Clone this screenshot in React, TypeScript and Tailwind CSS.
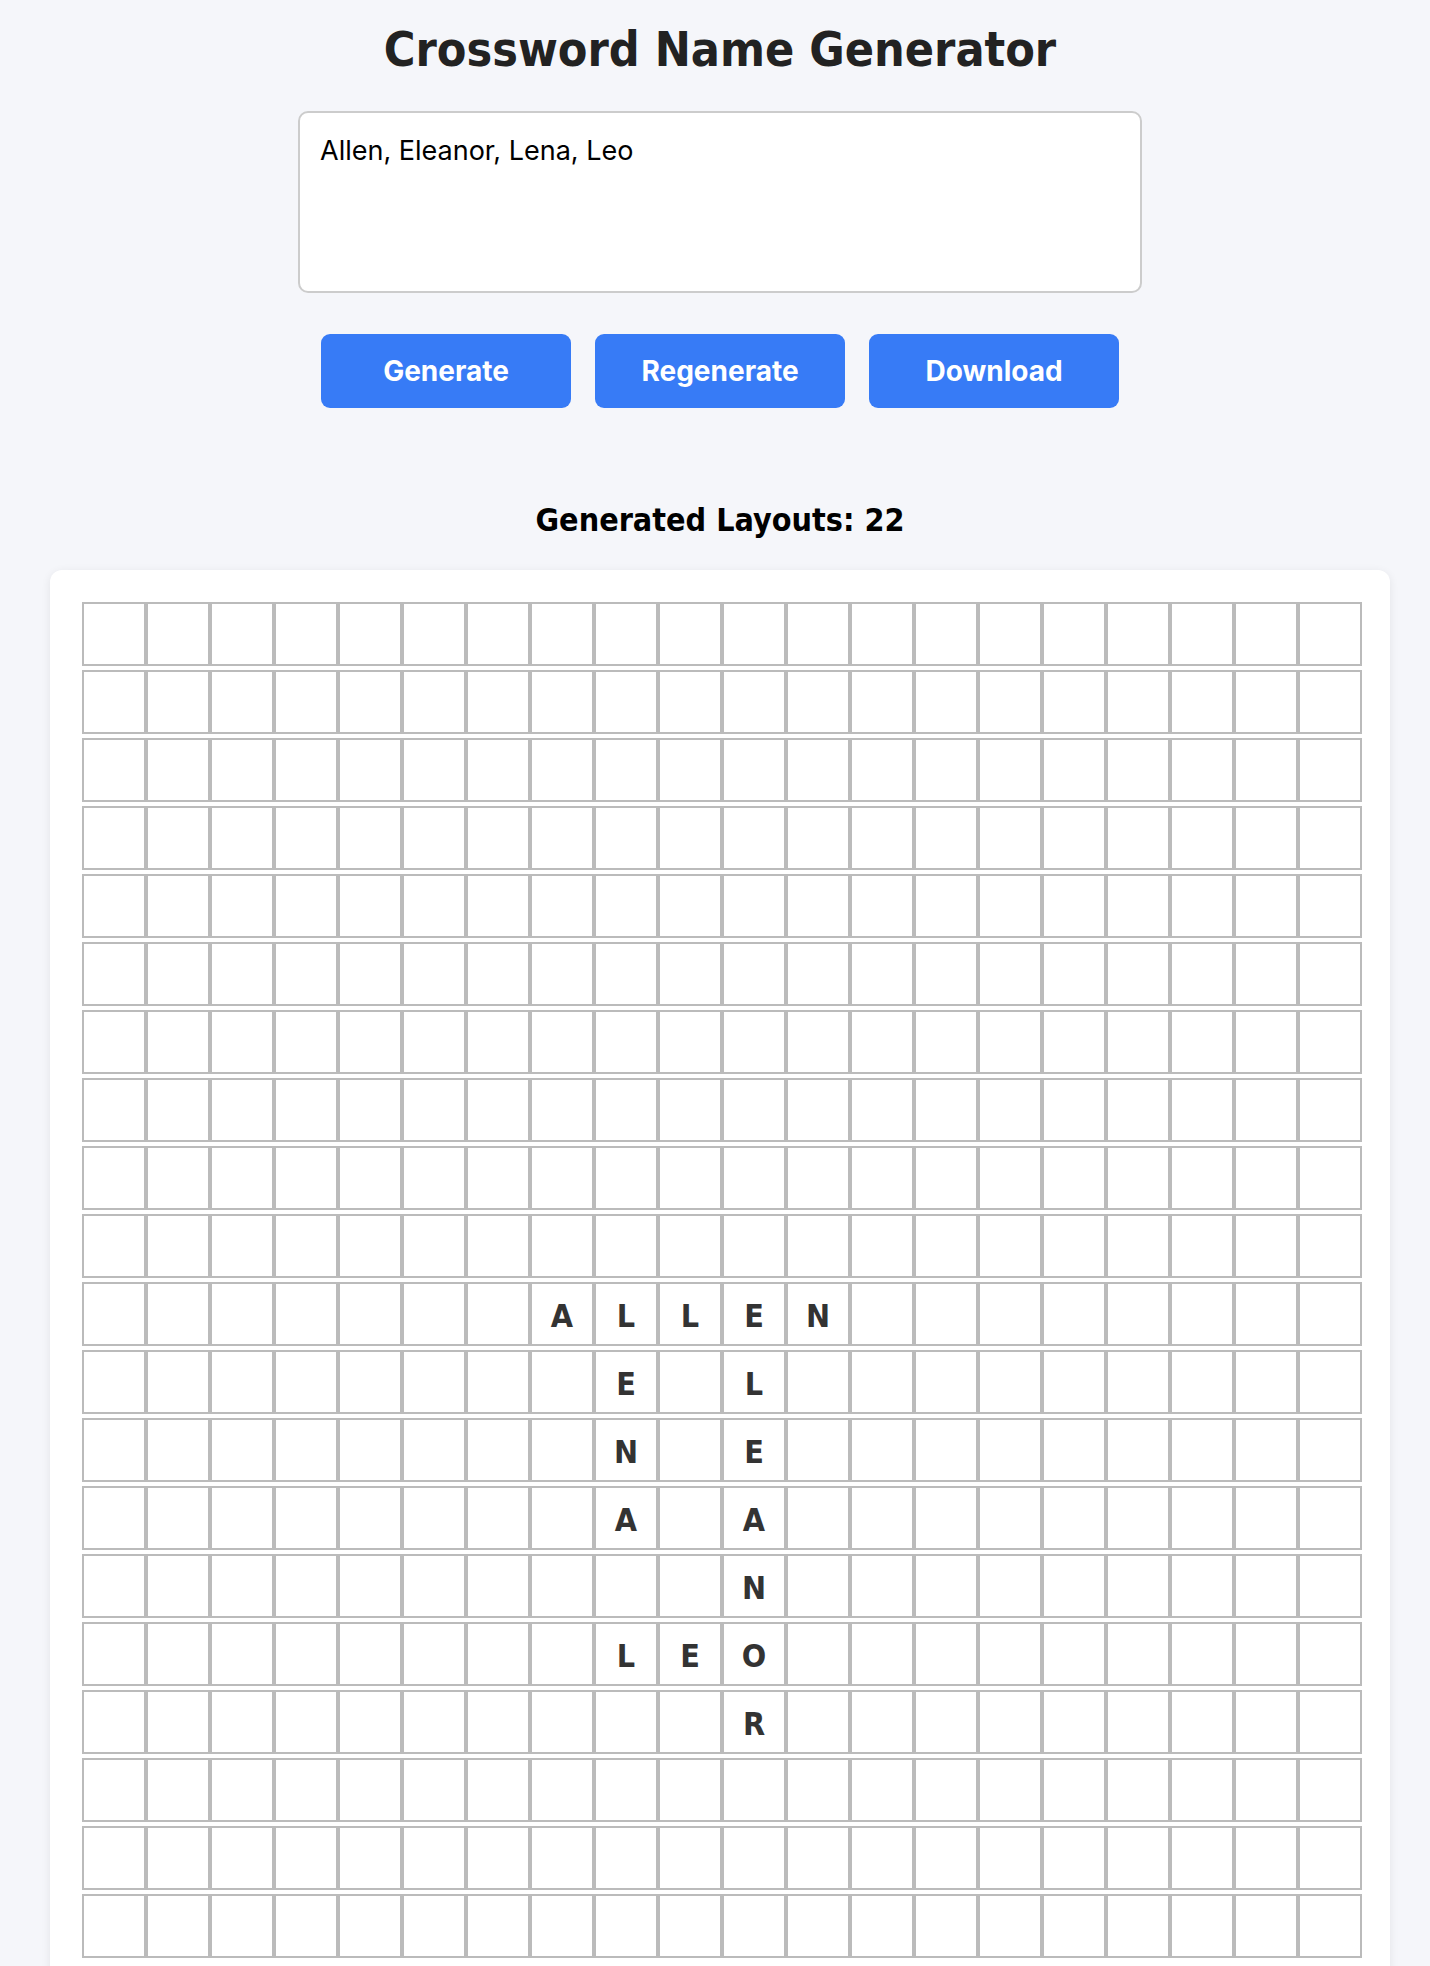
const ROWS = 20;
const COLS = 20;

// letters placed on the grid: [row, col, letter]
const placed: [number, number, string][] = [
  [10, 7, "A"], [10, 8, "L"], [10, 9, "L"], [10, 10, "E"], [10, 11, "N"],
  [11, 8, "E"], [12, 8, "N"], [13, 8, "A"],
  [11, 10, "L"], [12, 10, "E"], [13, 10, "A"], [14, 10, "N"], [15, 10, "O"], [16, 10, "R"],
  [15, 8, "L"], [15, 9, "E"],
];

const grid: string[][] = Array.from({ length: ROWS }, () => Array(COLS).fill(""));
placed.forEach(([r, c, ch]) => {
  grid[r][c] = ch;
});

const headFont = "font-['DejaVu_Sans_Condensed','DejaVu_Sans',sans-serif] [font-stretch:condensed]";

export default function App() {
  return (
    <div className="min-h-[1966px] w-full bg-[#f5f6fa] pl-[50px] pr-[40px] font-['Inter',sans-serif]">
      <div className="flex flex-col items-center">
        <h1 className={`${headFont} mt-[21px] text-[48px] leading-[56px] font-bold text-[#222]`}>
          Crossword Name Generator
        </h1>

        <textarea
          defaultValue="Allen, Eleanor, Lena, Leo"
          className="mt-[34px] h-[182px] w-[844px] resize-none rounded-[10px] border-2 border-[#cccccc] bg-white px-[20px] pt-[18px] pb-[20px] text-[27px] text-black outline-none"
        />

        <div className="mt-[41px] flex gap-[24px]">
          {["Generate", "Regenerate", "Download"].map(label => (
            <button
              key={label}
              className="flex h-[74px] w-[250px] items-center justify-center rounded-[9px] bg-[#377bf6] text-[28px] font-bold text-white"
            >
              {label}
            </button>
          ))}
        </div>

        <h2 className={`${headFont} mt-[94px] text-[32px] leading-[37px] font-bold text-black`}>
          Generated Layouts: 22
        </h2>
      </div>

      <div className="mt-[31px] w-[1340px] rounded-[12px] bg-white pl-[32px] pt-[32px] pb-[32px] shadow-[0_2px_10px_rgba(0,0,0,0.08)]">
        <div className="flex flex-col gap-[4px]">
          {grid.map((row, r) => (
            <div key={r} className="flex">
              {row.map((ch, c) => (
                <div
                  key={c}
                  className={`${headFont} flex h-[64px] w-[64px] shrink-0 items-center justify-center border-2 border-[#bbbbbb] pt-[3px] text-[32px] font-bold text-[#333]`}
                >
                  {ch}
                </div>
              ))}
            </div>
          ))}
        </div>
      </div>
    </div>
  );
}
